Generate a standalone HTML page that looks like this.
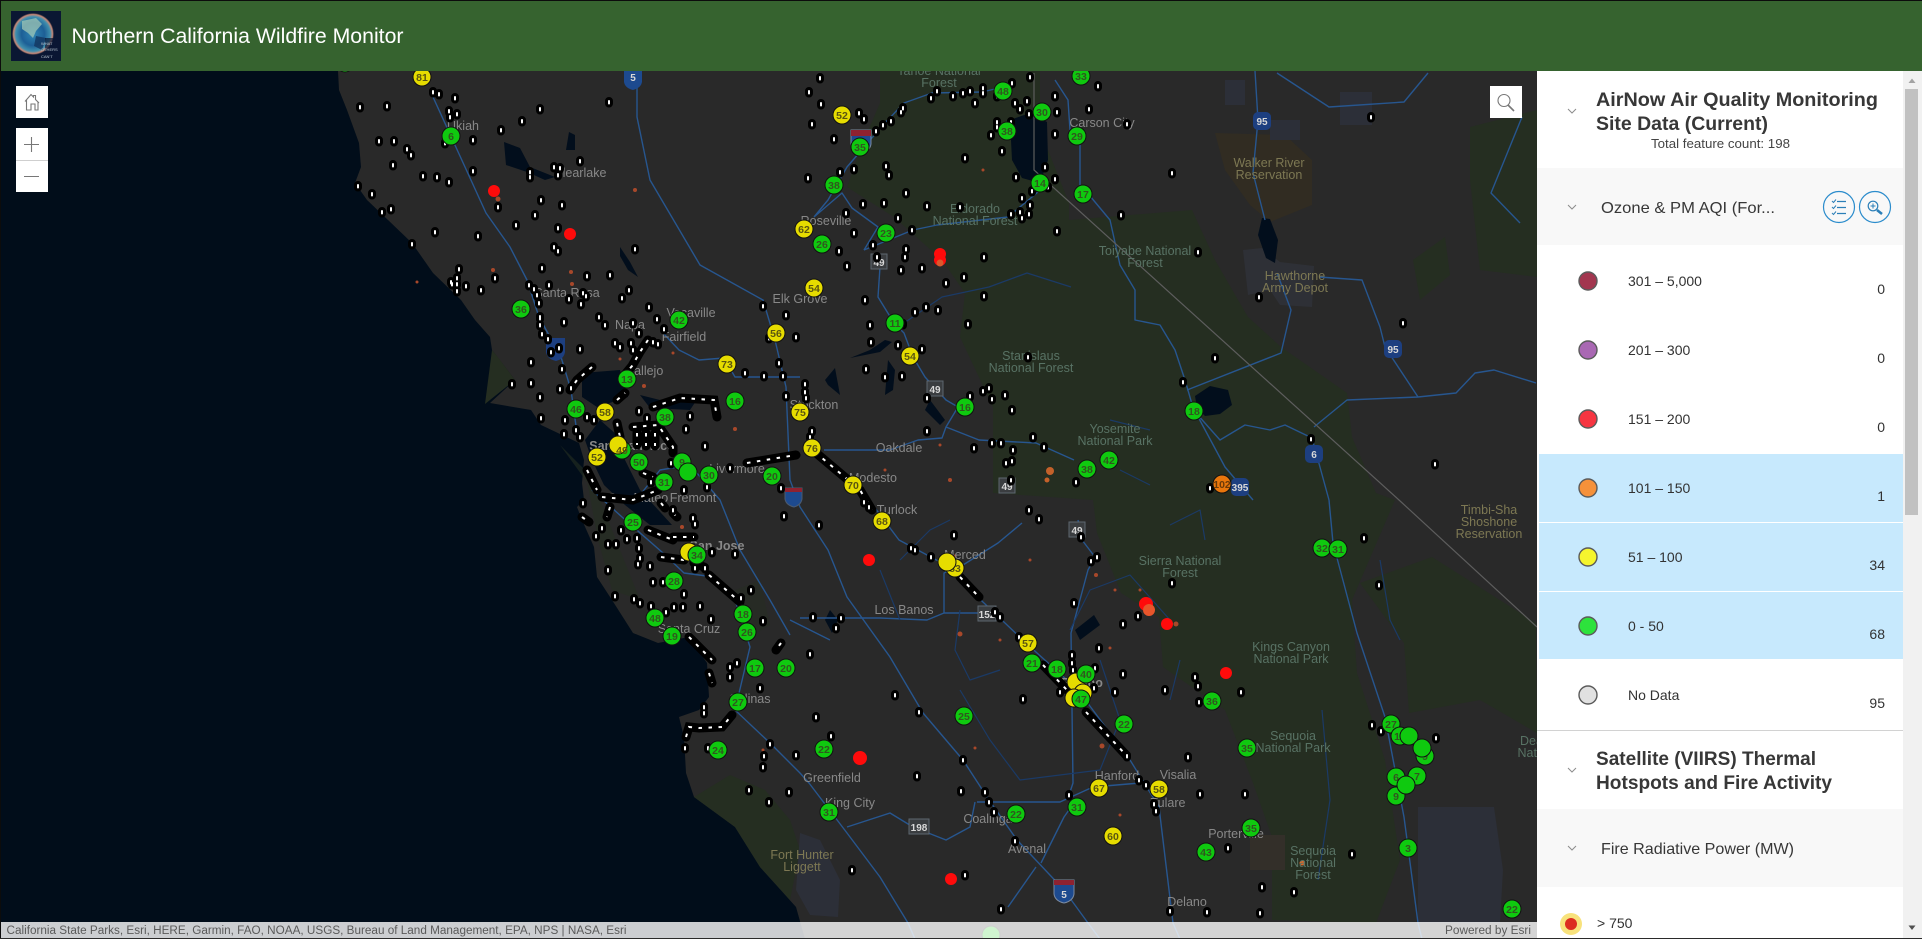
<!DOCTYPE html>
<html lang="en"><head><meta charset="utf-8"><title>Northern California Wildfire Monitor</title>
<style>
html,body{margin:0;padding:0;background:#000;overflow:hidden;width:1922px;height:939px}
svg{display:block;font-family:"Liberation Sans",Arial,sans-serif}
.rd{fill:none;stroke:#27568f;stroke-width:1.4;stroke-linejoin:round}
.rd2{fill:none;stroke:#1b3a66;stroke-width:1.2;stroke-linejoin:round}
.c text{font-size:12.5px;fill:#888;text-anchor:middle}
.f text{font-size:12.5px;fill:#587264;text-anchor:middle}
.o text{font-size:12.5px;fill:#7d7853;text-anchor:middle}
.m circle{r:9px;stroke:#111;stroke-width:1}
.m .g{fill:#0fc90f}.m .y{fill:#e6dc00}.m .r{fill:#ff0b0b;stroke:none;r:6px}.m .a{fill:#e8760c}
.m text{font-size:10.5px;font-weight:700;fill:#31561f;text-anchor:middle}
.m .yt{fill:#5a5510}
.s{font-size:10px;font-weight:700;text-anchor:middle;fill:#d8d8d8}
.h{font-size:19px;font-weight:700;fill:#373737}
.sub{font-size:16px;fill:#373737}
.t{font-size:14px;fill:#323232}
.n{font-size:14px;fill:#323232;text-anchor:end}
.lc{r:9px;stroke:#5b5b5b;stroke-width:1.4}
.chev{fill:none;stroke:#8c8c8c;stroke-width:1}
</style></head><body>
<svg width="1922" height="939" viewBox="0 0 1922 939" xmlns="http://www.w3.org/2000/svg">
<defs>
<radialGradient id="gl" cx=".5" cy=".5" r=".5"><stop offset="0" stop-color="#2f86b4"/><stop offset=".55" stop-color="#1d5f96"/><stop offset=".82" stop-color="#3f8fae"/><stop offset=".93" stop-color="#c98a78"/><stop offset="1" stop-color="#0a1530"/></radialGradient>
<clipPath id="mapc"><rect x="0" y="71" width="1537" height="868"/></clipPath>
<path id="pins" d="M360 106v2.5M387 105v2.5M433 91v2.5M439 93v2.5M455 97v2.5M540 108v2.5M609 101v2.5M449 110v2.5M457 113v2.5M450 116v2.5M522 120v2.5M501 129v2.5M379 140v2.5M394 140v2.5M407 148v2.5M411 154v2.5M445 142v2.5M473 139v2.5M393 164v2.5M473 170v2.5M423 175v2.5M437 176v2.5M449 181v2.5M580 160v2.5M554 166v2.5M560 167v2.5M530 171v2.5M530 176v2.5M558 174v2.5M358 185v2.5M372 193v2.5M391 208v2.5M382 211v2.5M541 199v2.5M562 204v2.5M498 206v2.5M535 214v2.5M516 224v2.5M558 227v2.5M435 231v2.5M478 235v2.5M412 243v2.5M554 246v2.5M558 250v2.5M635 248v2.5M459 268v2.5M542 267v2.5M495 277v2.5M587 275v2.5M610 274v2.5M457 277v2.5M451 281v2.5M457 283v2.5M452 283v2.5M466 285v2.5M457 290v2.5M481 289v2.5M529 284v2.5M534 288v2.5M549 284v2.5M537 294v2.5M539 302v2.5M569 298v2.5M583 292v2.5M586 295v2.5M581 303v2.5M622 297v2.5M629 289v2.5M599 316v2.5M540 316v2.5M540 317v2.5M540 324v2.5M542 333v2.5M548 338v2.5M559 347v2.5M551 351v2.5M581 303v2.5M564 321v2.5M599 316v2.5M605 324v2.5M633 322v2.5M639 332v2.5M649 306v2.5M657 318v2.5M664 328v2.5M763 305v2.5M786 314v2.5M615 342v2.5M620 346v2.5M631 342v2.5M633 349v2.5M653 341v2.5M658 343v2.5M580 348v2.5M531 361v2.5M562 368v2.5M531 382v2.5M512 383v2.5M560 388v2.5M540 396v2.5M571 387v2.5M541 417v2.5M565 419v2.5M576 429v2.5M564 433v2.5M580 436v2.5M587 416v2.5M594 419v2.5M639 410v2.5M647 417v2.5M690 415v2.5M686 428v2.5M705 445v2.5M583 502v2.5M596 535v2.5M602 527v2.5M608 543v2.5M616 543v2.5M621 529v2.5M627 538v2.5M637 537v2.5M639 547v2.5M640 557v2.5M638 563v2.5M650 565v2.5M608 569v2.5M653 581v2.5M663 581v2.5M684 593v2.5M615 595v2.5M634 598v2.5M640 602v2.5M651 605v2.5M666 611v2.5M674 606v2.5M683 606v2.5M700 605v2.5M711 618v2.5M763 620v2.5M751 589v2.5M741 597v2.5M735 553v2.5M712 551v2.5M695 567v2.5M705 567v2.5M693 517v2.5M695 523v2.5M784 515v2.5M684 489v2.5M707 486v2.5M671 462v2.5M651 481v2.5M673 509v2.5M745 372v2.5M764 375v2.5M783 375v2.5M786 395v2.5M779 362v2.5M796 336v2.5M769 337v2.5M730 467v2.5M781 487v2.5M760 687v2.5M685 747v2.5M708 747v2.5M770 743v2.5M764 755v2.5M796 754v2.5M763 766v2.5M749 789v2.5M789 791v2.5M769 801v2.5M820 77v2.5M809 91v2.5M821 103v2.5M859 112v2.5M864 118v2.5M812 123v2.5M834 138v2.5M886 165v2.5M889 174v2.5M840 171v2.5M854 168v2.5M808 177v2.5M906 192v2.5M863 203v2.5M884 202v2.5M927 205v2.5M960 206v2.5M846 212v2.5M898 217v2.5M854 232v2.5M912 229v2.5M873 244v2.5M839 250v2.5M877 256v2.5M906 248v2.5M905 256v2.5M847 265v2.5M901 269v2.5M922 267v2.5M984 256v2.5M964 276v2.5M946 282v2.5M984 295v2.5M865 299v2.5M926 306v2.5M915 311v2.5M938 309v2.5M870 324v2.5M968 323v2.5M903 323v2.5M871 341v2.5M898 344v2.5M922 348v2.5M866 368v2.5M885 376v2.5M902 375v2.5M1028 356v2.5M983 390v2.5M989 387v2.5M970 395v2.5M927 397v2.5M1005 394v2.5M992 398v2.5M1012 409v2.5M927 430v2.5M1033 436v2.5M992 442v2.5M1001 442v2.5M974 447v2.5M1044 446v2.5M1013 449v2.5M1006 462v2.5M1012 460v2.5M1011 479v2.5M1076 481v2.5M1210 487v2.5M1183 381v2.5M1215 357v2.5M1311 438v2.5M1435 463v2.5M1403 322v2.5M1259 296v2.5M1198 251v2.5M1121 214v2.5M1057 230v2.5M1172 172v2.5M1098 85v2.5M1089 108v2.5M1127 123v2.5M1371 116v2.5M1055 95v2.5M1057 111v2.5M1055 133v2.5M991 134v2.5M1002 150v2.5M965 157v2.5M1055 178v2.5M1016 176v2.5M1045 166v2.5M1022 197v2.5M1048 186v2.5M1032 190v2.5M1030 204v2.5M1029 213v2.5M1020 211v2.5M1011 213v2.5M1022 217v2.5M903 107v2.5M901 111v2.5M891 120v2.5M883 124v2.5M876 130v2.5M931 97v2.5M937 90v2.5M953 95v2.5M963 92v2.5M970 90v2.5M983 87v2.5M983 92v2.5M975 102v2.5M997 95v2.5M1012 82v2.5M1030 76v2.5M1015 102v2.5M1027 100v2.5M1020 108v2.5M1029 113v2.5M997 121v2.5M1011 121v2.5M997 126v2.5M819 524v2.5M869 506v2.5M864 501v2.5M954 534v2.5M1029 509v2.5M1039 518v2.5M1081 536v2.5M1364 537v2.5M1379 584v2.5M1097 556v2.5M1091 560v2.5M911 547v2.5M915 549v2.5M931 556v2.5M1074 602v2.5M1172 582v2.5M1138 615v2.5M1123 623v2.5M841 617v2.5M813 616v2.5M836 627v2.5M810 653v2.5M1099 647v2.5M1195 676v2.5M1198 685v2.5M1241 691v2.5M1165 689v2.5M1123 673v2.5M1115 691v2.5M1199 701v2.5M1023 698v2.5M895 694v2.5M816 716v2.5M919 711v2.5M831 735v2.5M1372 724v2.5M1381 730v2.5M1436 737v2.5M1188 756v2.5M1127 755v2.5M963 759v2.5M917 775v2.5M961 790v2.5M1200 793v2.5M1245 793v2.5M985 791v2.5M989 801v2.5M1069 794v2.5M1154 803v2.5M1156 810v2.5M994 811v2.5M1015 840v2.5M1228 847v2.5M1352 853v2.5M852 869v2.5M965 874v2.5M1262 886v2.5M1294 891v2.5M1001 908v2.5M1207 911v2.5M1260 912v2.5M1170 910v2.5M1072 654v2.5M1072 662v2.5M1073 669v2.5M1095 667v2.5M1060 691v2.5M1094 687v2.5M1139 779v2.5M1146 784v2.5M995 611v2.5M1000 616v2.5M1019 636v2.5M704 706v2.5M704 712v2.5M730 666v2.5M730 676v2.5M737 662v2.5M805 383v2.5M805 391v2.5M806 397v2.5M812 430v2.5M810 436v2.5"/>
<path id="lines" d="M648 340L640 352L632 366L622 378M592 367L577 380L570 390M617 400L625 393M653 407L680 398L714 400L717 417M617 423L620 437M633 427L658 425L673 447L673 453M637 433V445M646 433V446M655 433V446M587 470L597 490M602 497L633 500L658 490M643 473L653 477M747 463L796 455M610 507L607 517M582 517L589 522M648 530L673 540M673 537L694 537M661 557L684 560M661 503L665 508M673 513L677 517M694 563L704 567M709 575L740 602M689 637L712 660M709 673L712 683M781 643L776 650M686 737L689 727L699 728L722 727L732 715M815 452L860 490L872 510M960 577L979 597M1086 712L1126 755M1043 665L1067 690"/>
</defs>

<!-- base -->
<rect width="1922" height="939" fill="#1a1a1a"/>
<g clip-path="url(#mapc)">
<rect x="0" y="71" width="1537" height="868" fill="#010d1a"/>
<!-- land -->
<path fill="#292929" d="M338 71L339 90L347 110L359 143L361 167L355 183L367 200L388 220L412 243L433 273L461 300L475 320L490 337L492 350L515 380L490 403L531 410L541 425L579 443L584 460L582 483L584 500L577 507L582 520L594 547L597 577L612 600L633 633L658 643L689 637L707 663L709 697L699 710L679 717L684 737L686 773L694 797L735 827L760 867L796 907L805 939L1537 939L1537 71Z"/>
<!-- forests -->
<g fill="#252e21">
<path d="M880 71L1040 71L1040 130L1069 203L1069 220L1192 210L1215 260L1234 293L1248 317L1281 347L1347 393L1352 437L1376 493L1395 500L1352 600L1357 673L1385 760L1400 860L1376 923L1272 920L1272 837L1253 783L1225 710L1163 667L1159 617L1121 593L1097 533L1093 500L993 493L993 407L960 337L965 293L942 260L923 243L894 217L847 187L861 147L880 103Z"/>
<path d="M1360 583L1432 557L1536 623L1537 733L1480 700L1409 713L1404 643Z"/>
<path d="M1470 127L1537 110L1537 277L1480 270L1470 180Z"/>
<path d="M1413 260L1445 237L1450 275L1420 300Z"/>
<path d="M694 797L735 827L760 867L790 900L800 850L790 820L765 790L730 775Z"/>
<path d="M485 404L515 380L500 360L492 350Z"/>
<path d="M560 445L585 470L598 540L612 590L640 600L620 550L600 500Z" opacity=".6"/>
<path d="M735 590L760 580L770 625L745 640Z" opacity=".5"/>
</g>
<path fill="#312c22" d="M1215 133L1285 135L1312 160L1312 205L1270 222L1250 205L1225 170Z"/>
<path fill="#2e3036" d="M1243 250L1262 248L1280 262L1314 266L1312 307L1280 305L1270 290L1248 295Z"/>
<path fill="#2c2f38" d="M1418 807L1494 807L1503 870L1500 923L1418 923Z"/>
<path fill="#2c2f38" d="M1225 80H1245V105H1225ZM1340 92H1372V125H1340ZM1270 120H1300V140H1270ZM800 833L820 840L840 880L838 917L810 915L796 890Z"/>
<path fill="#332f29" d="M1250 835H1285V870H1250Z"/>
<!-- water -->
<g fill="#020e1c">
<path d="M504 142L520 148L530 167L555 177L545 180L527 172L506 165Z"/>
<path d="M569 132L575 135L575 150L566 150Z"/>
<path d="M620 247L630 262L638 277L628 270L620 256Z"/>
<path d="M1010 120L1030 113L1047 122L1048 160L1040 183L1022 178L1012 160Z"/>
<path d="M1262 218L1270 219L1278 240L1275 263L1266 258L1258 235Z"/>
<path d="M1197 408L1195 396L1210 386L1228 390L1232 405L1220 414L1205 416Z"/>
<path d="M582 373L620 370L628 397L597 407L582 397Z"/>
<path d="M585 440L600 420L617 435L625 460L640 490L672 525L650 525L625 505L604 485L592 460Z"/>
<path d="M640 395L660 400L700 395L690 410L650 408Z"/>
<path d="M825 380L835 368L840 395L828 385Z"/>
<path d="M885 340L870 350L850 358L880 352L892 342ZM888 360L885 395L893 390L895 370ZM930 400L945 420L940 425L925 410Z"/>
<path d="M830 610L838 620L832 633L825 620Z"/>
<path d="M1094 615L1100 625L1080 640L1075 630Z"/>
</g>
<!-- roads -->
<g class="rd">
<path d="M637 71L637 117L650 180L700 265L763 300L775 340L786 387L790 480L800 507L828 550L847 597L890 657L923 713L963 760L989 800L1017 840L1064 890L1088 923L1100 939"/>
<path d="M433 97L465 167L486 213L510 247L527 280L539 317L561 357L571 390L577 433M592 490L622 517L663 553L684 573L714 577L735 600L750 647L735 710L770 743L800 773L809 783L847 833L880 877L908 923L915 939"/>
<path d="M812 450L860 488L899 540L942 563L1026 643L1078 690L1130 760L1159 807L1173 923L1180 939"/>
<path d="M663 333L679 350L699 360L724 358L735 377H800M814 217L828 200L847 167L883 125L904 103L932 93L982 92L1012 85M864 250L878 227L852 208L842 193L814 217"/>
<path d="M864 250L913 230L937 225L1008 217L1038 192"/>
<path d="M880 267L878 297L894 323L904 333L913 357L925 377L946 400L958 407L946 427L942 438L918 440L890 450H824"/>
<path d="M946 427L979 440L1036 443L1074 460"/>
<path d="M800 618H880L927 620L944 613H985M944 613V573L963 565L998 543L1022 523"/>
<path d="M1078 520L1082 540L1095 557L1088 570L1071 633L1073 783L1069 795M977 802H1060L1093 787L1140 783M847 827L890 813L913 827L946 840L970 827L975 802M1041 863L1064 817L1076 800M1008 907L1036 867"/>
<path d="M1329 500L1333 543L1357 633L1385 717L1404 817L1418 923L1422 939"/>
<path d="M1329 500L1312 438L1285 425L1270 430L1245 425L1220 440L1196 413M1196 413L1225 467L1253 500M1314 427L1347 400L1418 397L1456 393L1475 373L1494 370L1536 383"/>
<path d="M1255 71L1258 120L1253 173L1265 220M1277 273L1291 310L1281 353L1187 390M1319 277L1362 280L1380 327L1385 347L1418 397"/>
<path d="M1277 73L1329 107L1404 102L1428 73M1522 117L1491 193L1520 223"/>
<path d="M1055 80L1068 100L1070 130L1080 135V185L1085 190L1110 220L1120 265L1135 290L1135 320L1160 325L1175 350L1185 380L1194 411"/>
<path d="M640 495L660 470L690 465L720 500L740 550L770 600L790 635M790 620L830 640"/>
</g>
<g class="rd2">
<path d="M904 323L942 297L989 287L1027 273L1071 287M1110 420L1150 430M1120 470L1150 485M1170 525L1200 510L1205 540M1070 630L1090 590L1130 575L1170 620M1100 660L1120 720L1100 770L1020 780L990 740L960 690M880 570L900 620M960 610L955 650L970 680L1000 670M1322 710L1330 800L1318 880M1180 660L1170 700"/>
<path d="M1380 560L1390 620L1400 640M950 520L930 530L900 560"/>
</g>
<path d="M1034 73V170L1399 500L1537 627" fill="none" stroke="#5d5d5d" stroke-width="1.2"/>
<!-- small fire specks -->
<g fill="#a8482a">
<circle cx="498" cy="199" r="2.5"/><circle cx="1050" cy="471" r="4" fill="#c4612a"/><circle cx="1047" cy="480" r="2.5" fill="#c4612a"/><circle cx="955" cy="556" r="1.5"/><circle cx="960" cy="634" r="2.5"/><circle cx="1176" cy="624" r="2.5"/><circle cx="1110" cy="648" r="1.5"/><circle cx="1302" cy="863" r="2.5" fill="#d9692d"/><circle cx="1102" cy="746" r="2.5"/><circle cx="975" cy="748" r="1.5"/><circle cx="1120" cy="815" r="1.5"/><circle cx="620" cy="359" r="1.5"/><circle cx="673" cy="353" r="1.5"/><circle cx="644" cy="386" r="2"/><circle cx="735" cy="429" r="2"/><circle cx="682" cy="527" r="2"/><circle cx="763" cy="750" r="1.5"/><circle cx="950" cy="480" r="2"/><circle cx="885" cy="470" r="1.5"/><circle cx="940" cy="445" r="1.5"/><circle cx="1000" cy="640" r="1.5"/><circle cx="1030" cy="560" r="1.5"/><circle cx="1115" cy="590" r="1.5"/><circle cx="1096" cy="575" r="2"/><circle cx="1140" cy="590" r="1.5"/><circle cx="983" cy="170" r="1.5"/><circle cx="635" cy="190" r="2"/><circle cx="493" cy="270" r="2"/><circle cx="417" cy="282" r="1.5"/><circle cx="571" cy="272" r="2"/><circle cx="572" cy="284" r="2"/></g>
<!-- labels -->
<g class="c">
<text x="463" y="130">Ukiah</text><text x="580" y="177">Clearlake</text><text x="567" y="297">Santa Rosa</text><text x="691" y="317">Vacaville</text><text x="630" y="329">Napa</text><text x="684" y="341">Fairfield</text><text x="645" y="375">Vallejo</text><text x="632" y="450" font-weight="700">San Francisco</text><text x="737" y="473">Livermore</text><text x="638" y="502">San Mateo</text><text x="693" y="502">Fremont</text><text x="717" y="550" font-weight="700">San Jose</text><text x="689" y="633">Santa Cruz</text><text x="750" y="703">Salinas</text><text x="1102" y="127">Carson City</text><text x="826" y="225">Roseville</text><text x="800" y="303">Elk Grove</text><text x="814" y="409">Stockton</text><text x="899" y="452">Oakdale</text><text x="873" y="482">Modesto</text><text x="897" y="514">Turlock</text><text x="965" y="559">Merced</text><text x="904" y="614">Los Banos</text><text x="1082" y="687" font-weight="700">Fresno</text><text x="832" y="782">Greenfield</text><text x="1117" y="780">Hanford</text><text x="1178" y="779">Visalia</text><text x="850" y="807">King City</text><text x="1168" y="807">Tulare</text><text x="988" y="823">Coalinga</text><text x="1236" y="838">Porterville</text><text x="1027" y="853">Avenal</text><text x="1187" y="906">Delano</text>
</g>
<g class="f">
<text x="939" y="75">Tahoe National</text><text x="939" y="87">Forest</text><text x="975" y="213">Eldorado</text><text x="975" y="225">National Forest</text><text x="1145" y="255">Toiyabe National</text><text x="1145" y="267">Forest</text><text x="1031" y="360">Stanislaus</text><text x="1031" y="372">National Forest</text><text x="1115" y="433">Yosemite</text><text x="1115" y="445">National Park</text><text x="1180" y="565">Sierra National</text><text x="1180" y="577">Forest</text><text x="1291" y="651">Kings Canyon</text><text x="1291" y="663">National Park</text><text x="1293" y="740">Sequoia</text><text x="1293" y="752">National Park</text><text x="1313" y="855">Sequoia</text><text x="1313" y="867">National</text><text x="1313" y="879">Forest</text><text x="1555" y="745">Death Valley</text><text x="1555" y="757">National Park</text>
</g>
<g class="o">
<text x="1269" y="167">Walker River</text><text x="1269" y="179">Reservation</text><text x="1295" y="280">Hawthorne</text><text x="1295" y="292">Army Depot</text><text x="1489" y="514">Timbi-Sha</text><text x="1489" y="526">Shoshone</text><text x="1489" y="538">Reservation</text><text x="802" y="859">Fort Hunter</text><text x="802" y="871">Liggett</text>
</g>
<!-- shields -->
<g>
<path d="M624 70h18v12q-1 6-9 8q-8-2-9-8z" fill="#1d4a8f"/><text x="633" y="81" class="s">5</text>
<path d="M1054 880h20v14q-1 7-10 9q-9-2-10-9z" fill="#1d4a8f" stroke="#7a8aa0"/><rect x="1054" y="880" width="20" height="5" fill="#8f2230"/><text x="1064" y="898" class="s">5</text>
<path d="M851 130h20v14q-1 7-10 9q-9-2-10-9z" fill="#1d4a8f" stroke="#7a8aa0"/><rect x="851" y="130" width="20" height="6" fill="#8f2230"/>
<path d="M785 488h17v11q-1 6-8 8q-8-2-9-8z" fill="#1d4a8f" stroke="#4a5a70"/><rect x="785" y="488" width="17" height="4" fill="#8f2230"/>
<path d="M546 338h19v14q-1 7-9 9q-9-2-10-9z" fill="#1d3f80"/>
<g fill="#1d3f80"><rect x="1253" y="112" width="18" height="18" rx="5"/><rect x="1384" y="340" width="18" height="18" rx="5"/><rect x="1305" y="445" width="18" height="18" rx="5"/><rect x="1231" y="478" width="18" height="18" rx="5"/></g>
<text x="1262" y="125" class="s">95</text><text x="1393" y="353" class="s">95</text><text x="1314" y="458" class="s">6</text><text x="1240" y="491" class="s">395</text>
<g fill="#3a3d40" stroke="#5d6670"><rect x="871" y="254" width="16" height="15"/><rect x="927" y="381" width="16" height="15"/><rect x="999" y="478" width="16" height="15"/><rect x="1069" y="522" width="16" height="15"/><rect x="978" y="606" width="18" height="15"/><rect x="909" y="819" width="20" height="15"/></g>
<text x="879" y="266" class="s">49</text><text x="935" y="393" class="s">49</text><text x="1007" y="490" class="s">49</text><text x="1077" y="534" class="s">49</text><text x="987" y="618" class="s">152</text><text x="919" y="831" class="s">198</text>
</g>
<!-- pins -->
<use href="#lines" fill="none" stroke="#000" stroke-width="9" stroke-linecap="round"/>
<use href="#lines" fill="none" stroke="#fff" stroke-width="2" stroke-dasharray="3.5 6.5"/>
<use href="#pins" fill="none" stroke="#000" stroke-width="8" stroke-linecap="round"/>
<use href="#pins" fill="none" stroke="#fff" stroke-width="2" stroke-linecap="round"/>
<!-- markers -->
<g class="m">
<circle class="r" cx="494" cy="191"/><circle class="r" cx="570" cy="234"/><circle class="r" cx="940" cy="254"/><circle class="r" cx="940" cy="260"/><circle cx="940" cy="263" style="r:3.5px;stroke:none;fill:#d9592d"/><circle class="r" cx="869" cy="560"/><circle class="r" cx="1146" cy="604" style="r:7px"/><circle cx="1149" cy="610" style="r:6px;stroke:none;fill:#e8552b"/><circle class="r" cx="1167" cy="624"/><circle class="r" cx="1226" cy="673"/><circle class="r" cx="860" cy="758" style="r:7px"/><circle class="r" cx="951" cy="879"/>
<g transform="translate(345,63)"><circle class="g"/></g>
<g transform="translate(422,77)"><circle class="y"/><text y="4" class="yt">81</text></g>
<g transform="translate(451,136)"><circle class="g"/><text y="4">6</text></g>
<g transform="translate(521,309)"><circle class="g"/><text y="4">36</text></g>
<g transform="translate(679,320)"><circle class="g"/><text y="4">42</text></g>
<g transform="translate(776,333)"><circle class="y"/><text y="4" class="yt">56</text></g>
<g transform="translate(727,364)"><circle class="y"/><text y="4" class="yt">73</text></g>
<g transform="translate(627,379)"><circle class="g"/><text y="4">13</text></g>
<g transform="translate(735,401)"><circle class="g"/><text y="4">16</text></g>
<g transform="translate(576,409)"><circle class="g"/><text y="4">46</text></g>
<g transform="translate(605,412)"><circle class="y"/><text y="4" class="yt">58</text></g>
<g transform="translate(665,417)"><circle class="g"/><text y="4">38</text></g>
<g transform="translate(800,412)"><circle class="y"/><text y="4" class="yt">75</text></g>
<g transform="translate(622,450)"><circle class="g"/></g>
<g transform="translate(618,445)"><circle class="y"/><text x="4" y="9" class="yt">49</text></g>
<g transform="translate(597,457)"><circle class="y"/><text y="4" class="yt">52</text></g>
<g transform="translate(639,462)"><circle class="g"/><text y="4">50</text></g>
<g transform="translate(682,462)"><circle class="g"/><text y="4">9</text></g>
<g transform="translate(688,472)"><circle class="g"/></g>
<g transform="translate(709,475)"><circle class="g"/><text y="4">30</text></g>
<g transform="translate(772,476)"><circle class="g"/><text y="4">20</text></g>
<g transform="translate(664,482)"><circle class="g"/><text y="4">31</text></g>
<g transform="translate(633,522)"><circle class="g"/><text y="4">25</text></g>
<g transform="translate(689,552)"><circle class="y"/></g>
<g transform="translate(697,555)"><circle class="g"/><text y="4">34</text></g>
<g transform="translate(674,581)"><circle class="g"/><text y="4">28</text></g>
<g transform="translate(743,614)"><circle class="g"/><text y="4">18</text></g>
<g transform="translate(655,618)"><circle class="g"/><text y="4">48</text></g>
<g transform="translate(747,632)"><circle class="g"/><text y="4">26</text></g>
<g transform="translate(672,636)"><circle class="g"/><text y="4">19</text></g>
<g transform="translate(755,668)"><circle class="g"/><text y="4">17</text></g>
<g transform="translate(786,668)"><circle class="g"/><text y="4">20</text></g>
<g transform="translate(738,702)"><circle class="g"/><text y="4">27</text></g>
<g transform="translate(718,750)"><circle class="g"/><text y="4">24</text></g>
<g transform="translate(1081,76)"><circle class="g"/><text y="4">33</text></g>
<g transform="translate(1003,91)"><circle class="g"/><text y="4">48</text></g>
<g transform="translate(1042,112)"><circle class="g"/><text y="4">30</text></g>
<g transform="translate(842,115)"><circle class="y"/><text y="4" class="yt">52</text></g>
<g transform="translate(1007,131)"><circle class="g"/><text y="4">38</text></g>
<g transform="translate(1077,136)"><circle class="g"/><text y="4">29</text></g>
<g transform="translate(860,147)"><circle class="g"/><text y="4">35</text></g>
<g transform="translate(834,185)"><circle class="g"/><text y="4">38</text></g>
<g transform="translate(1040,183)"><circle class="g"/><text y="4">14</text></g>
<g transform="translate(1083,194)"><circle class="g"/><text y="4">17</text></g>
<g transform="translate(804,229)"><circle class="y"/><text y="4" class="yt">62</text></g>
<g transform="translate(886,233)"><circle class="g"/><text y="4">23</text></g>
<g transform="translate(822,244)"><circle class="g"/><text y="4">26</text></g>
<g transform="translate(814,288)"><circle class="y"/><text y="4" class="yt">54</text></g>
<g transform="translate(895,323)"><circle class="g"/><text y="4">11</text></g>
<g transform="translate(910,356)"><circle class="y"/><text y="4" class="yt">54</text></g>
<g transform="translate(965,407)"><circle class="g"/><text y="4">16</text></g>
<g transform="translate(1194,411)"><circle class="g"/><text y="4">18</text></g>
<g transform="translate(812,448)"><circle class="y"/><text y="4" class="yt">76</text></g>
<g transform="translate(1109,460)"><circle class="g"/><text y="4">42</text></g>
<g transform="translate(1087,469)"><circle class="g"/><text y="4">38</text></g>
<g transform="translate(1222,484)"><circle class="a"/><text y="4" style="fill:#6b3a08">102</text></g>
<g transform="translate(853,485)"><circle class="y"/><text y="4" class="yt">70</text></g>
<g transform="translate(882,521)"><circle class="y"/><text y="4" class="yt">68</text></g>
<g transform="translate(1322,548)"><circle class="g"/><text y="4">32</text></g>
<g transform="translate(1338,549)"><circle class="g"/><text y="4">31</text></g>
<g transform="translate(955,568)"><circle class="y"/><text y="4" class="yt">83</text></g>
<g transform="translate(947,562)"><circle class="y"/></g>
<g transform="translate(1028,643)"><circle class="y"/><text y="4" class="yt">57</text></g>
<g transform="translate(1032,663)"><circle class="g"/><text y="4">21</text></g>
<g transform="translate(1057,669)"><circle class="g"/><text y="4">18</text></g>
<g transform="translate(1076,682)"><circle class="y"/></g>
<g transform="translate(1086,674)"><circle class="g"/><text y="4">40</text></g>
<g transform="translate(1212,701)"><circle class="g"/><text y="4">36</text></g>
<g transform="translate(1083,693)"><circle class="y"/></g>
<g transform="translate(1074,698)"><circle class="y"/></g>
<g transform="translate(1081,699)"><circle class="g"/><text y="4">47</text></g>
<g transform="translate(964,716)"><circle class="g"/><text y="4">25</text></g>
<g transform="translate(1124,724)"><circle class="g"/><text y="4">22</text></g>
<g transform="translate(1391,724)"><circle class="g"/><text y="4">27</text></g>
<g transform="translate(1400,736)"><circle class="g"/><text y="4">10</text></g>
<g transform="translate(1409,736)"><circle class="g"/></g>
<g transform="translate(1425,756)"><circle class="g"/><text y="4">9</text></g>
<g transform="translate(1422,748)"><circle class="g"/></g>
<g transform="translate(1247,748)"><circle class="g"/><text y="4">35</text></g>
<g transform="translate(824,749)"><circle class="g"/><text y="4">22</text></g>
<g transform="translate(1396,777)"><circle class="g"/><text y="4">6</text></g>
<g transform="translate(1417,776)"><circle class="g"/><text y="4">7</text></g>
<g transform="translate(1396,796)"><circle class="g"/><text y="4">9</text></g>
<g transform="translate(1406,785)"><circle class="g"/></g>
<g transform="translate(1099,788)"><circle class="y"/><text y="4" class="yt">67</text></g>
<g transform="translate(1159,789)"><circle class="y"/><text y="4" class="yt">58</text></g>
<g transform="translate(1077,807)"><circle class="g"/><text y="4">31</text></g>
<g transform="translate(829,812)"><circle class="g"/><text y="4">31</text></g>
<g transform="translate(1016,814)"><circle class="g"/><text y="4">22</text></g>
<g transform="translate(1251,828)"><circle class="g"/><text y="4">35</text></g>
<g transform="translate(1113,836)"><circle class="y"/><text y="4" class="yt">60</text></g>
<g transform="translate(1408,848)"><circle class="g"/><text y="4">3</text></g>
<g transform="translate(1206,852)"><circle class="g"/><text y="4">43</text></g>
<g transform="translate(1512,909)"><circle class="g"/><text y="4">22</text></g>
<g transform="translate(991,935)"><circle class="g"/></g>
</g>
</g>

<!-- attribution -->
<rect x="0" y="922" width="1537" height="16" fill="#fff" fill-opacity=".8"/>
<text x="6.5" y="934" font-size="11.5" fill="#5a5a5a" textLength="620" lengthAdjust="spacingAndGlyphs">California State Parks, Esri, HERE, Garmin, FAO, NOAA, USGS, Bureau of Land Management, EPA, NPS | NASA, Esri</text>
<text x="1445" y="934" font-size="11.5" fill="#5a5a5a" textLength="86" lengthAdjust="spacingAndGlyphs">Powered by Esri</text>

<!-- map controls -->
<rect x="16" y="86" width="32" height="32" fill="#fff"/>
<path d="M25 101.5L31 94.5L33.5 97V95.5H35.5V99.5L39 103M26.5 100V110H31V104H35V110H38V101.5" fill="none" stroke="#777" stroke-width="1.1"/>
<rect x="16" y="128" width="32" height="64" fill="#fff"/>
<path d="M16 160.5H48" stroke="#cfcfcf"/>
<path d="M24 144.5H39M31.5 137V152M24 176.5H39" stroke="#777" stroke-width="1.1"/>
<rect x="1490" y="86" width="32" height="32" fill="#fff"/>
<circle cx="1504" cy="100.5" r="6" fill="none" stroke="#777" stroke-width="1.1"/>
<path d="M1508 105L1514 111" stroke="#777" stroke-width="1.6"/>

<!-- header -->
<rect x="1" y="1" width="1921" height="70" fill="#36632f"/>
<rect x="11" y="11" width="50" height="50" fill="#0a1733"/>
<circle cx="33" cy="34" r="21" fill="url(#gl)"/>
<path d="M22 21L36 18L42 24L36 31L33 38L28 33L22 29Z" fill="#9fc7b5" fill-opacity=".75"/>
<path d="M36 36L46 38L42 50L34 46Z" fill="#13365f" fill-opacity=".8"/>
<rect x="45" y="38" width="16" height="23" fill="#0a1733" fill-opacity=".7"/>
<g font-size="4" fill="#b9c6cf"><text x="41" y="45">WHAT</text><text x="41" y="51">OTHERS</text><text x="41" y="58">CAN'T</text></g>
<text x="71.5" y="43" font-size="21" fill="#fff" textLength="332" lengthAdjust="spacingAndGlyphs">Northern California Wildfire Monitor</text>

<!-- panel -->
<rect x="1537" y="71" width="385" height="868" fill="#fff"/>
<rect x="1903" y="71" width="19" height="867" fill="#f1f1f1"/>
<rect x="1905" y="89" width="13" height="426" fill="#c1c1c1"/>
<path d="M1908.5 83L1912 78.5L1915.5 83Z" fill="#a3a3a3"/>
<path d="M1908.5 925.5L1912 930L1915.5 925.5Z" fill="#505050"/>

<path class="chev" d="M1568 109L1572 113L1576 109"/>
<text class="h" x="1596" y="106" textLength="282" lengthAdjust="spacingAndGlyphs">AirNow Air Quality Monitoring</text>
<text class="h" x="1596" y="130" textLength="172" lengthAdjust="spacingAndGlyphs">Site Data (Current)</text>
<text x="1651" y="148" font-size="13" fill="#444" textLength="139" lengthAdjust="spacingAndGlyphs">Total feature count: 198</text>

<rect x="1537" y="168" width="366" height="77" fill="#f8f8f8"/>
<path class="chev" d="M1568 205L1572 209L1576 205"/>
<text class="sub" x="1601" y="213" textLength="174" lengthAdjust="spacingAndGlyphs">Ozone &amp; PM AQI (For...</text>
<circle cx="1839" cy="207" r="15.5" fill="none" stroke="#2b8ccc" stroke-width="1.2"/>
<circle cx="1875" cy="207" r="15.5" fill="none" stroke="#2b8ccc" stroke-width="1.2"/>
<path d="M1837 201.5H1846M1837 207.5H1846M1837 213.5H1846" stroke="#2b7fb8" stroke-width="1.2"/>
<path d="M1832 201L1833.5 202.5L1836 199.5M1832 207L1833.5 208.5L1836 205.5M1832 213L1833.5 214.5L1836 211.5" fill="none" stroke="#2b7fb8" stroke-width="1"/>
<circle cx="1873" cy="206" r="4.8" fill="none" stroke="#2b7fb8" stroke-width="1.2"/>
<path d="M1870.5 206H1875.5M1873 203.5V208.5" stroke="#2b7fb8" stroke-width="1"/>
<path d="M1877 210L1882 214" stroke="#2b7fb8" stroke-width="2.6"/>

<rect x="1539" y="454" width="364" height="68" fill="#c7e9fd"/>
<rect x="1539" y="523" width="364" height="68" fill="#c7e9fd"/>
<rect x="1539" y="592" width="364" height="67" fill="#c7e9fd"/>

<circle class="lc" cx="1588" cy="281" fill="#a2364f"/><text class="t" x="1628" y="286">301 – 5,000</text><text class="n" x="1885" y="294">0</text>
<circle class="lc" cx="1588" cy="350" fill="#a968b3"/><text class="t" x="1628" y="355">201 – 300</text><text class="n" x="1885" y="363">0</text>
<circle class="lc" cx="1588" cy="419" fill="#f63541"/><text class="t" x="1628" y="424">151 – 200</text><text class="n" x="1885" y="432">0</text>
<circle class="lc" cx="1588" cy="488" fill="#f5913a"/><text class="t" x="1628" y="493">101 – 150</text><text class="n" x="1885" y="501">1</text>
<circle class="lc" cx="1588" cy="557" fill="#f5f52e"/><text class="t" x="1628" y="562">51 – 100</text><text class="n" x="1885" y="570">34</text>
<circle class="lc" cx="1588" cy="626" fill="#2de23c"/><text class="t" x="1628" y="631">0 - 50</text><text class="n" x="1885" y="639">68</text>
<circle class="lc" cx="1588" cy="695" fill="#e1e1e1"/><text class="t" x="1628" y="700">No Data</text><text class="n" x="1885" y="708">95</text>
<path d="M1537 730.5H1903" stroke="#d2d2d2"/>

<path class="chev" d="M1568 768L1572 772L1576 768"/>
<text class="h" x="1596" y="765" textLength="220" lengthAdjust="spacingAndGlyphs">Satellite (VIIRS) Thermal</text>
<text class="h" x="1596" y="789" textLength="236" lengthAdjust="spacingAndGlyphs">Hotspots and Fire Activity</text>
<rect x="1537" y="809" width="366" height="78" fill="#f8f8f8"/>
<path class="chev" d="M1568 846L1572 850L1576 846"/>
<text class="sub" x="1601" y="854" textLength="193" lengthAdjust="spacingAndGlyphs">Fire Radiative Power (MW)</text>
<circle cx="1571" cy="924" r="11" fill="#f8e27c"/>
<circle cx="1571" cy="924" r="6" fill="#dc2c20"/>
<text class="t" x="1597" y="928">&gt; 750</text>

<!-- screen edge -->
<rect x="0" y="0" width="1922" height="1" fill="#0c0c0c"/>
<rect x="0" y="0" width="1" height="939" fill="#0c0c0c"/>
<rect x="0" y="938" width="1922" height="1" fill="#2a2a2a"/>
</svg>
</body></html>
